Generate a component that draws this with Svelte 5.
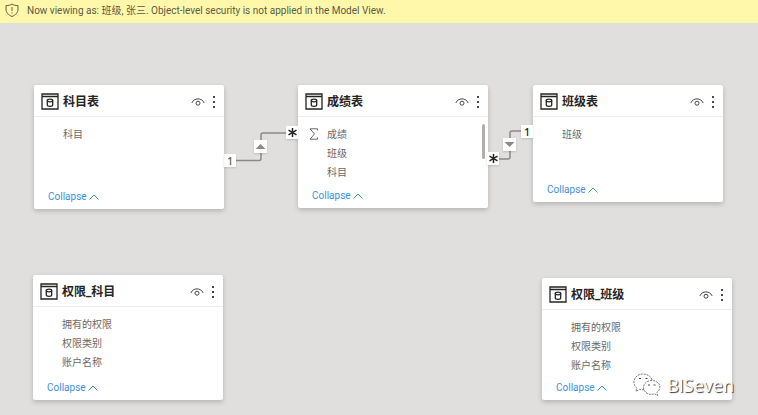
<script>
  const cards = [
    { id: 'subject', title: '科目表', x: 34, y: 85, h: 124, fields: [{ name: '科目' }] },
    { id: 'score', title: '成绩表', x: 298, y: 85, h: 123, scroll: true, fields: [{ name: '成绩', sum: true }, { name: '班级' }, { name: '科目' }] },
    { id: 'class', title: '班级表', x: 533, y: 85, h: 117, fields: [{ name: '班级' }] },
    { id: 'perm-subject', title: '权限_科目', x: 33, y: 275, h: 125, fields: [{ name: '拥有的权限' }, { name: '权限类别' }, { name: '账户名称' }] },
    { id: 'perm-class', title: '权限_班级', x: 542, y: 278, h: 122, fields: [{ name: '拥有的权限' }, { name: '权限类别' }, { name: '账户名称' }] }
  ];
  const ends = [
    { x: 224, y: 154, label: '1', muted: true },
    { x: 286, y: 126, label: '*' },
    { x: 487, y: 152, label: '*' },
    { x: 521, y: 125, label: '1' }
  ];
  const directions = [
    { x: 254, y: 140, path: 'M1.500 9 6.500 4 11.500 9Z' },
    { x: 503, y: 138, path: 'M1.500 4 6.500 9 11.500 4Z' }
  ];
</script>

<div class="app">
  <div class="notice" role="status">
    <svg width="14" height="14" viewBox="0 0 14 14" aria-hidden="true">
      <path d="M7 1C5.500 2.200 3.500 2.600 1 2.500V6c0 3.500 2 5.700 6 7.500 4-1.800 6-4 6-7.500V2.500C10.500 2.600 8.500 2.200 7 1ZM7 4v4M7 9.300v1.200" />
    </svg>
    <span>Now viewing as: 班级, 张三. Object-level security is not applied in the Model View.</span>
  </div>

  <main>
    <svg class="links" aria-hidden="true">
      <path d="M236 160.500H259Q261 160.500 261 158.500V135Q261 133 263 133H288M498 159H508Q510 159 510 157V133Q510 131 512 131H522" />
    </svg>

    {#each cards as card (card.id)}
      <section class="card" style="left:{card.x}px;top:{card.y}px;height:{card.h}px">
        <header>
          <svg class="table" width="18" height="17" viewBox="0 0 18 17" aria-hidden="true">
            <path d="M1 1H17V16H1ZM1 3.500H17" />
            <ellipse cx="9" cy="7.500" rx="2.700" ry="1.300" />
            <path d="M6.300 7.500V12c0 1.700 5.400 1.700 5.400 0V7.500" />
          </svg>
          <h2>{card.title}</h2>
          <button class="icon" aria-label="Toggle visibility">
            <svg width="14" height="10" viewBox="0 0 14 10">
              <path d="M.8 6C3 .5 11 .5 13.200 6" />
              <circle cx="7" cy="6.200" r="2" />
            </svg>
          </button>
          <button class="icon more" aria-label="More options">
            <svg width="4" height="14" viewBox="0 0 4 14">
              <path d="M1 1h2v2H1zM1 6h2v2H1zM1 11h2v2H1z" />
            </svg>
          </button>
        </header>
        <ul>
          {#each card.fields as field}
            <li>
              {#if field.sum}
                <svg class="sigma" width="10" height="12" viewBox="0 0 10 12" aria-hidden="true">
                  <path d="M8.500 2.500V.8H1L5.500 6 1 11.200H8.500V9.500" />
                </svg>
              {/if}
              {field.name}
            </li>
          {/each}
        </ul>
        {#if card.scroll}<span class="thumb"></span>{/if}
        <button class="collapse">
          Collapse
          <svg width="10" height="6" viewBox="0 0 10 6" aria-hidden="true"><path d="M.5 5.500 5 1l4.500 4.500" /></svg>
        </button>
      </section>
    {/each}

    {#each ends as end}
      <span class="end" class:muted={end.muted} style="left:{end.x}px;top:{end.y}px">
        {#if end.label === '*'}
          <svg width="11" height="11" viewBox="0 0 11 11" role="img" aria-label="many">
            <path d="M5.500 1v9M1.500 3.200l8 4.600M9.500 3.200l-8 4.600" />
          </svg>
        {:else}
          {end.label}
        {/if}
      </span>
    {/each}

    {#each directions as dir}
      <span class="direction" style="left:{dir.x}px;top:{dir.y}px">
        <svg width="13" height="13" viewBox="0 0 13 13" aria-hidden="true"><path d={dir.path} /></svg>
      </span>
    {/each}

    <div class="mark">
      <svg width="28" height="24" viewBox="0 0 28 24" aria-hidden="true">
        <path d="M11 16.500C9.500 17 7.500 16.800 6.500 16.300L3 18.500 3.800 15C-2 10.500 1.500 1 10 1c5 0 8.500 3 9.200 6.500" />
        <path d="M19 7.500c-5 0-8.500 3.200-8.500 7 0 5 6 8.300 11 6.300l3.200 1.700-.8-3C30 14.500 26 7.500 19 7.500Z" />
        <path class="eyes" d="M6 5.500h2M12.500 5.500h2M15 12h2M20.500 12h2" />
      </svg>
      <span>BISeven</span>
    </div>
  </main>
</div>

<style>
  :global(body) {
    margin: 0;
    background: #e0dfdd;
  }
  .app {
    display: flex;
    flex-direction: column;
    min-height: 100vh;
    position: relative;
    overflow: hidden;
    background: #e0dfdd;
    color: #6b6967;
    font-family: 'Open Sans', 'Noto Sans CJK SC', sans-serif;
    font-size: 10px;
  }
  .notice {
    display: flex;
    align-items: center;
    gap: 8px;
    height: 23px;
    padding: 0 5px 4px;
    box-sizing: border-box;
    background: #fff8ab;
    color: #5c5a45;
    font-family: Roboto, 'Noto Sans CJK SC', sans-serif;
    white-space: nowrap;
  }
  svg {
    fill: none;
    stroke: currentColor;
    flex: none;
  }
  main {
    flex: 1;
  }
  .links {
    position: absolute;
    inset: 0;
    width: 100%;
    height: 100%;
    color: #8b8a88;
    stroke-width: 1.500;
  }
  .card {
    position: absolute;
    display: flex;
    flex-direction: column;
    width: 190px;
    box-sizing: border-box;
    background: #fff;
    border-radius: 2px;
    box-shadow: 0 2px 5px rgba(0, 0, 0, 0.2);
  }
  header {
    display: flex;
    align-items: center;
    height: 32px;
    padding: 2px 8px 0 7px;
    box-sizing: border-box;
    border-bottom: 1px solid #eeedec;
    color: #252423;
  }
  .table {
    stroke-width: 1.300;
  }
  h2 {
    flex: 1;
    margin: 0 0 0 4px;
    font-family: Roboto, 'Noto Sans CJK SC', sans-serif;
    font-size: 12px;
    line-height: 16px;
    font-weight: 700;
  }
  button {
    display: flex;
    align-items: center;
    padding: 0;
    border: 0;
    background: none;
    font: inherit;
  }
  .icon {
    color: #4a4846;
  }
  .more {
    margin-left: 7px;
  }
  .more svg {
    fill: currentColor;
    stroke: none;
  }
  ul {
    flex: 1;
    margin: 0;
    padding: 8px 0 0;
    list-style: none;
  }
  li {
    position: relative;
    height: 19px;
    padding-left: 29px;
    line-height: 19px;
  }
  .sigma {
    position: absolute;
    left: 11px;
    top: 3px;
  }
  .thumb {
    position: absolute;
    right: 3px;
    top: 39px;
    width: 3px;
    height: 35px;
    border-radius: 2px;
    background: #b0afae;
  }
  .collapse {
    align-self: flex-start;
    gap: 2px;
    margin: 0 0 4px 14px;
    font-family: Roboto, sans-serif;
    line-height: 16px;
    color: #4091d9;
  }
  .end,
  .direction {
    position: absolute;
    display: flex;
    align-items: center;
    justify-content: center;
    width: 12px;
    height: 13px;
    background: #fff;
    color: #252423;
    font-weight: 600;
    box-shadow: 0 1px 2px rgba(0, 0, 0, 0.15);
  }
  .muted {
    color: #605e5c;
  }
  .end svg {
    stroke-width: 1.500;
  }
  .direction {
    width: 13px;
  }
  .direction svg {
    fill: #8b8a88;
    stroke: none;
  }
  .mark {
    position: absolute;
    right: 24px;
    bottom: 18px;
    display: flex;
    align-items: center;
    gap: 6px;
    color: #fff;
    font-size: 18px;
    line-height: 24px;
    text-shadow: 1px 1px 1px #333;
  }
  .mark svg {
    fill: #fff;
    stroke: #777;
    stroke-width: 1;
    stroke-dasharray: 2 1;
  }
  .mark .eyes {
    stroke: #444;
    stroke-dasharray: none;
  }
</style>
